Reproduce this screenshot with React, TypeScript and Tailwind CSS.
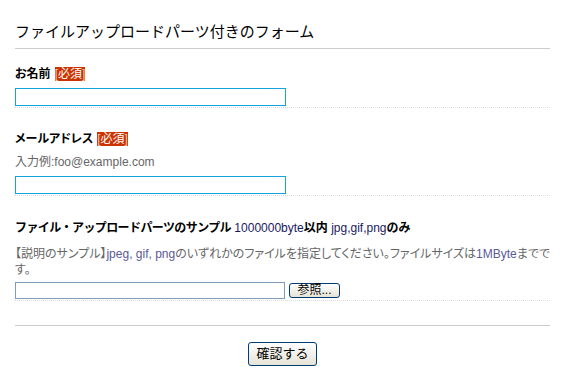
import React from 'react';

const font = "font-['Liberation_Sans','Noto_Sans_CJK_JP',sans-serif]";

function Required() {
  return (
    <span className="ml-[4px] inline-flex h-[14px] items-center bg-[#cc3300] px-0 text-[12px] font-normal leading-[14px] text-white [font-feature-settings:normal]">
      <span className="text-[#f3c8b8]">[</span>必須<span className="text-[#f3c8b8]">]</span>
    </span>
  );
}

function TextBox() {
  return <input type="text" className="block h-[18px] w-[271px] border border-[#16a2dc] bg-white outline-none" />;
}

function App() {
  return (
    <div className={`min-h-screen w-full bg-white text-black ${font}`}>
      <div className="ml-[15px] w-[535px]">
        <h1 className="border-b border-[#cccccc] pt-[22px] pb-[6px] text-[15px] font-normal leading-[20px] text-black">
          ファイルアップロードパーツ付きのフォーム
        </h1>

        {/* お名前 */}
        <div className="mt-[17px] border-b border-dotted border-[#dddddd] pb-[1px]">
          <div className="flex h-[16px] items-center text-[12px] font-bold leading-[16px] [font-feature-settings:'palt']">
            お名前<Required />
          </div>
          <div className="mt-[6px]">
            <TextBox />
          </div>
        </div>

        {/* メールアドレス */}
        <div className="border-b border-dotted border-[#dddddd] pt-[23px] pb-[1px]">
          <div className="flex h-[16px] items-center text-[12px] font-bold leading-[16px] [font-feature-settings:'palt']">
            メールアドレス<Required />
          </div>
          <p className="mt-[7px] text-[12px] leading-[16px] text-[#666666]">入力例:foo@example.com</p>
          <div className="mt-[6px]">
            <TextBox />
          </div>
        </div>

        {/* ファイル */}
        <div className="border-b border-dotted border-[#dddddd] pt-[24px] pb-[1px]">
          <div className="h-[16px] whitespace-nowrap text-[12px] font-bold leading-[16px]">
            <span className="tracking-[-0.6px]">ファイル・アップロードパーツのサンプル</span>{' '}
            <span className="font-normal text-[#1a1a5e]">1000000byte</span>以内{' '}
            <span className="font-normal text-[#1a1a5e]">jpg,gif,png</span>のみ
          </div>
          <p className="mt-[10px] text-[12px] leading-[16px] text-[#666666] [font-feature-settings:'palt']">
            <span className="whitespace-nowrap">
              【説明のサンプル】<span className="text-[#5a5a96]">jpeg, gif, png</span>
              のいずれかのファイルを指定してください。ファイルサイズは
              <span className="text-[#5a5a96]">1MByte</span>までで
            </span>
            <br />
            す。
          </p>
          <div className="mt-[4px] flex items-center gap-[4px]">
            <input type="text" readOnly className="block h-[17px] w-[270px] border border-[#7f9db9] bg-white outline-none" />
            <button
              type="button"
              className="h-[15px] w-[51px] rounded-[3px] border border-[#003c74] bg-gradient-to-b from-white to-[#e6e3d6] text-[12px] leading-[13px] text-black"
            >
              参照...
            </button>
          </div>
        </div>

        <div className="mt-[24px] border-t border-[#cccccc]" />

        <div className="mt-[16px] flex justify-center">
          <button
            type="button"
            className="h-[24px] w-[69px] rounded-[3px] border border-[#003c74] bg-gradient-to-b from-white to-[#e6e3d6] text-[13px] leading-[20px] text-black"
          >
            確認する
          </button>
        </div>
      </div>
    </div>
  );
}

export default App;
